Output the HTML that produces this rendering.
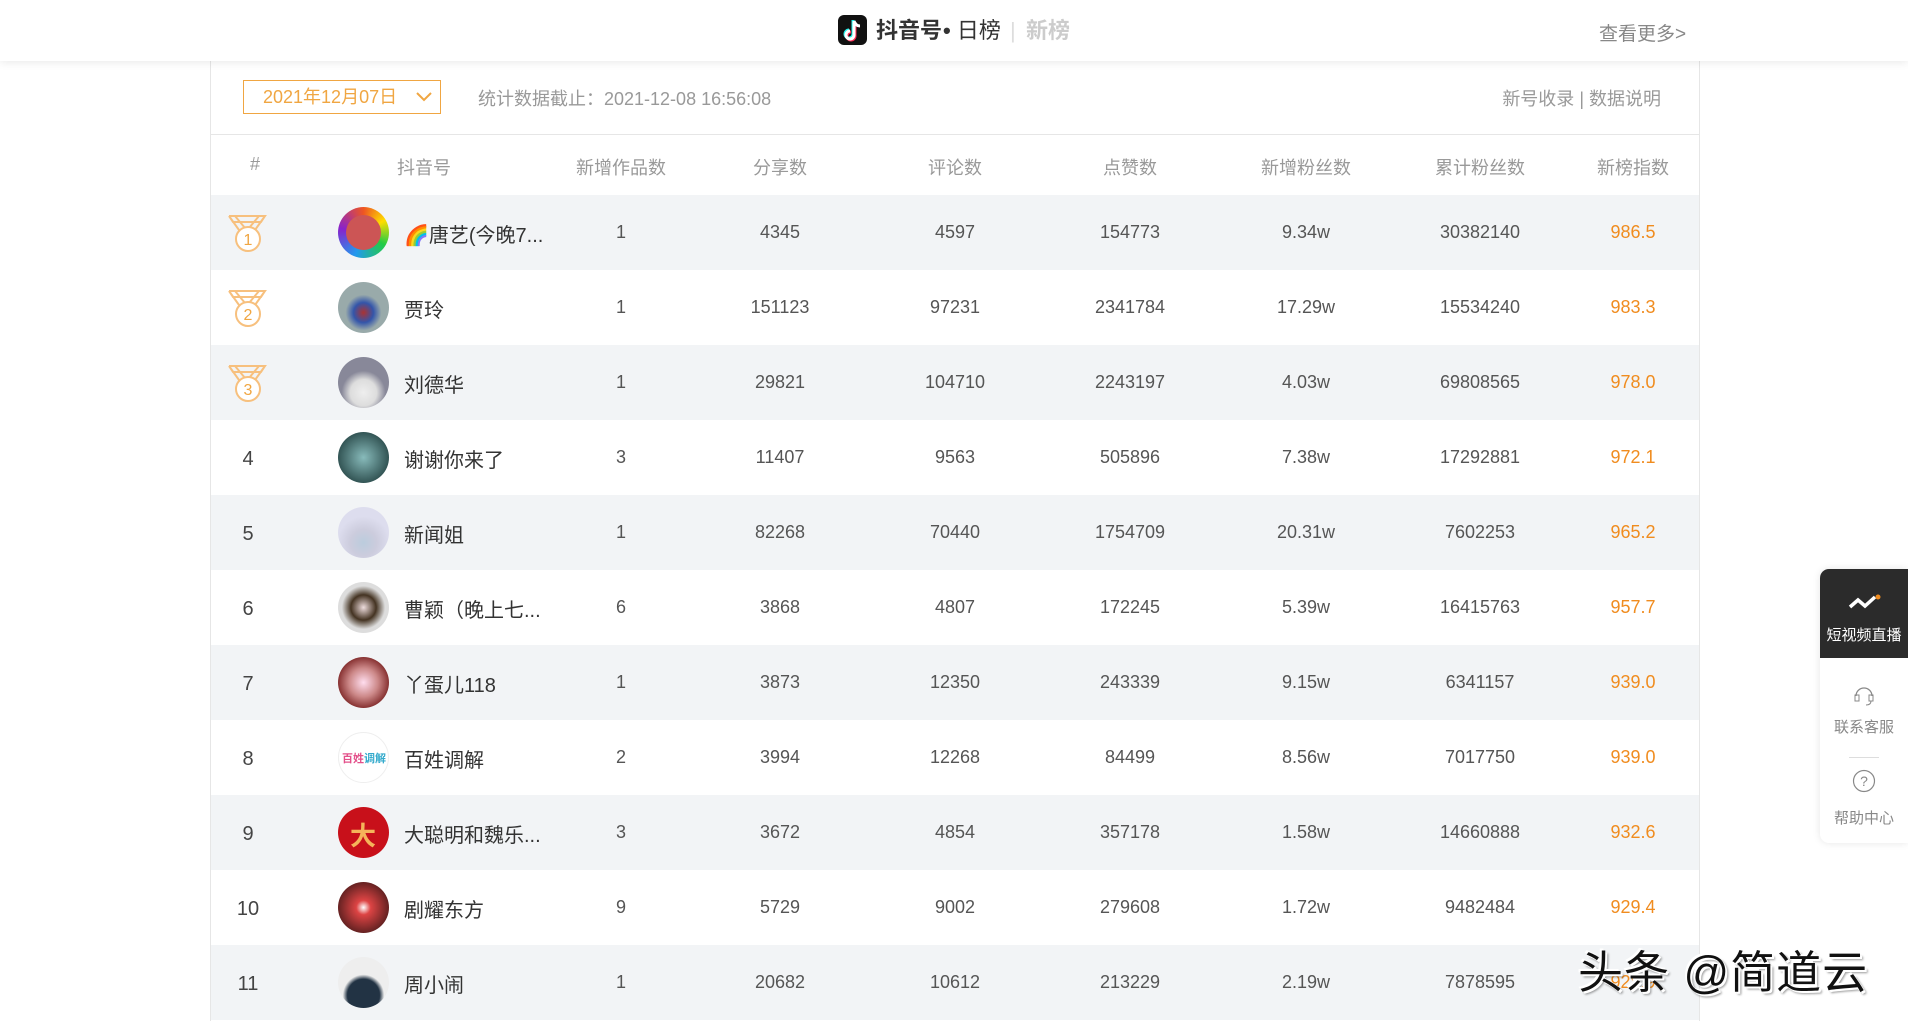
<!DOCTYPE html>
<html><head><meta charset="utf-8"><style>
*{margin:0;padding:0;box-sizing:border-box}
body{width:1908px;height:1016px;overflow:hidden;background:#fff;font-family:"Liberation Sans","Noto Sans CJK SC",sans-serif;position:relative;color:#333}
.hdr{position:absolute;left:0;top:0;width:1908px;height:61px;background:#fff;box-shadow:0 2px 8px rgba(0,0,0,.08);z-index:2}
.logo{position:absolute;left:838px;top:15px;width:29px;height:30px;background:#111;border-radius:6px}
.ht{position:absolute;top:17px;font-size:22px;line-height:28px}
.more{position:absolute;left:1599px;top:19px;font-size:19px;color:#888}
.box{position:absolute;left:210px;top:61px;width:1490px;height:960px;border-left:1px solid #e6e6e6;border-right:1px solid #e6e6e6}
.date{position:absolute;left:243px;top:80px;width:198px;height:34px;border:1px solid #f0a642;color:#f0a642;font-size:18px;line-height:32px;padding-left:19px}
.stat{position:absolute;left:478px;top:85px;font-size:18px;color:#999}
.rt{position:absolute;right:247px;top:85px;font-size:18px;color:#999}
.line{position:absolute;left:210px;top:134px;width:1490px;height:1px;background:#e6e6e6}
.th{position:absolute;top:154px;font-size:18px;color:#999;transform:translateX(-50%)}
.row{position:absolute;left:211px;width:1488px;height:75px}
.row.g{background:#f2f4f6}
.c{position:absolute;top:27px;font-size:18px;color:#555;transform:translateX(-50%);white-space:nowrap}
.o{color:#f08c1f}
.rk{position:absolute;left:37px;top:28px;font-size:20px;color:#444;transform:translateX(-50%)}
.av{position:absolute;left:127px;top:12px;width:51px;height:51px;border-radius:50%}
.nm{position:absolute;left:193px;top:24px;font-size:20px;color:#333;white-space:nowrap}
.side{position:absolute;left:1820px;top:569px;width:88px;height:274px;background:#fff;border-radius:9px 0 0 9px;box-shadow:0 0 8px rgba(0,0,0,.1);overflow:hidden}
.wm{position:absolute;left:1578px;top:936px;font-size:45px;color:#111;letter-spacing:1px;text-shadow:2px 2px 0 #fff,-2px -2px 0 #fff,3px 3px 2px rgba(0,0,0,.4)}
</style></head><body>
<div class="hdr">
<div class="logo"><svg width="29" height="30" viewBox="0 0 29 30"><path d="M16 6v14a4 4 0 1 1-4-4" stroke="#25f4ee" stroke-width="3" fill="none" transform="translate(-1,-1)"/><path d="M16 6v14a4 4 0 1 1-4-4" stroke="#fe2c55" stroke-width="3" fill="none" transform="translate(1,1)"/><path d="M16 6v14a4 4 0 1 1-4-4M16 6c1 3 3 5 6 5" stroke="#fff" stroke-width="3" fill="none"/></svg></div>
<div class="ht" style="left:876px;font-weight:bold">抖音号</div>
<div class="ht" style="left:943px"><b>•</b>&nbsp;日榜</div>
<div class="ht" style="left:1010px;color:#ddd">|</div>
<div class="ht" style="left:1026px;color:#ccc;font-weight:bold">新榜</div>
<div class="more">查看更多&gt;</div>
</div>
<div class="box"></div>
<div class="date">2021年12月07日<svg style="position:absolute;left:172px;top:11px" width="16" height="10"><path d="M1 1l7 7 7-7" stroke="#f0a642" stroke-width="2" fill="none"/></svg></div>
<div class="stat">统计数据截止：2021-12-08 16:56:08</div>
<div class="rt">新号收录 | 数据说明</div>
<div class="line"></div>
<div class="th" style="left:255px">#</div>
<div class="th" style="left:424px">抖音号</div>
<div class="th" style="left:621px">新增作品数</div>
<div class="th" style="left:780px">分享数</div>
<div class="th" style="left:955px">评论数</div>
<div class="th" style="left:1130px">点赞数</div>
<div class="th" style="left:1306px">新增粉丝数</div>
<div class="th" style="left:1480px">累计粉丝数</div>
<div class="th" style="left:1633px">新榜指数</div>

<div class="row g" style="top:195px"><svg style="position:absolute;left:14px;top:17px" width="46" height="42"><path d="M4 4h36l-10 14M4 4l10 14M10 4l10 12M34 4l-10 12M4 4l4 6h28l4-6" stroke="#f7c07e" stroke-width="2" fill="none"/><circle cx="23" cy="27" r="12" fill="#fff" stroke="#f7c07e" stroke-width="2"/><text x="23" y="33" font-size="16" fill="#f0a642" text-anchor="middle" font-family="Liberation Sans">1</text></svg><div class="av" style="background:conic-gradient(#e52 0,#fd0 60deg,#2c4 120deg,#29e 200deg,#82c 280deg,#e52)"><div style="position:absolute;left:8px;top:8px;width:35px;height:35px;border-radius:50%;background:#c55"></div></div><div class="nm">🌈唐艺(今晚7...</div><div class="c" style="left:410px">1</div><div class="c" style="left:569px">4345</div><div class="c" style="left:744px">4597</div><div class="c" style="left:919px">154773</div><div class="c" style="left:1095px">9.34w</div><div class="c" style="left:1269px">30382140</div><div class="c o" style="left:1422px">986.5</div></div>

<div class="row" style="top:270px"><svg style="position:absolute;left:14px;top:17px" width="46" height="42"><path d="M4 4h36l-10 14M4 4l10 14M10 4l10 12M34 4l-10 12M4 4l4 6h28l4-6" stroke="#f7c07e" stroke-width="2" fill="none"/><circle cx="23" cy="27" r="12" fill="#fff" stroke="#f7c07e" stroke-width="2"/><text x="23" y="33" font-size="16" fill="#f0a642" text-anchor="middle" font-family="Liberation Sans">2</text></svg><div class="av" style="background:radial-gradient(circle at 50% 60%,#a33 0,#35a 25%,#9aa 45%)"></div><div class="nm">贾玲</div><div class="c" style="left:410px">1</div><div class="c" style="left:569px">151123</div><div class="c" style="left:744px">97231</div><div class="c" style="left:919px">2341784</div><div class="c" style="left:1095px">17.29w</div><div class="c" style="left:1269px">15534240</div><div class="c o" style="left:1422px">983.3</div></div>

<div class="row g" style="top:345px"><svg style="position:absolute;left:14px;top:17px" width="46" height="42"><path d="M4 4h36l-10 14M4 4l10 14M10 4l10 12M34 4l-10 12M4 4l4 6h28l4-6" stroke="#f7c07e" stroke-width="2" fill="none"/><circle cx="23" cy="27" r="12" fill="#fff" stroke="#f7c07e" stroke-width="2"/><text x="23" y="33" font-size="16" fill="#f0a642" text-anchor="middle" font-family="Liberation Sans">3</text></svg><div class="av" style="background:radial-gradient(circle at 50% 70%,#eee 0,#ddd 30%,#889 50%)"></div><div class="nm">刘德华</div><div class="c" style="left:410px">1</div><div class="c" style="left:569px">29821</div><div class="c" style="left:744px">104710</div><div class="c" style="left:919px">2243197</div><div class="c" style="left:1095px">4.03w</div><div class="c" style="left:1269px">69808565</div><div class="c o" style="left:1422px">978.0</div></div>

<div class="row" style="top:420px"><div class="rk">4</div><div class="av" style="background:radial-gradient(circle,#8bb 0,#355 70%)"></div><div class="nm">谢谢你来了</div><div class="c" style="left:410px">3</div><div class="c" style="left:569px">11407</div><div class="c" style="left:744px">9563</div><div class="c" style="left:919px">505896</div><div class="c" style="left:1095px">7.38w</div><div class="c" style="left:1269px">17292881</div><div class="c o" style="left:1422px">972.1</div></div>

<div class="row g" style="top:495px"><div class="rk">5</div><div class="av" style="background:radial-gradient(circle at 50% 70%,#bcd 0,#ccd 30%,#dde 60%)"></div><div class="nm">新闻姐</div><div class="c" style="left:410px">1</div><div class="c" style="left:569px">82268</div><div class="c" style="left:744px">70440</div><div class="c" style="left:919px">1754709</div><div class="c" style="left:1095px">20.31w</div><div class="c" style="left:1269px">7602253</div><div class="c o" style="left:1422px">965.2</div></div>

<div class="row" style="top:570px"><div class="rk">6</div><div class="av" style="background:radial-gradient(circle at 50% 50%,#edd 0,#432 35%,#ddd 60%)"></div><div class="nm">曹颖（晚上七...</div><div class="c" style="left:410px">6</div><div class="c" style="left:569px">3868</div><div class="c" style="left:744px">4807</div><div class="c" style="left:919px">172245</div><div class="c" style="left:1095px">5.39w</div><div class="c" style="left:1269px">16415763</div><div class="c o" style="left:1422px">957.7</div></div>

<div class="row g" style="top:645px"><div class="rk">7</div><div class="av" style="background:radial-gradient(circle,#fde 0,#c88 40%,#833 70%)"></div><div class="nm">丫蛋儿118</div><div class="c" style="left:410px">1</div><div class="c" style="left:569px">3873</div><div class="c" style="left:744px">12350</div><div class="c" style="left:919px">243339</div><div class="c" style="left:1095px">9.15w</div><div class="c" style="left:1269px">6341157</div><div class="c o" style="left:1422px">939.0</div></div>

<div class="row" style="top:720px"><div class="rk">8</div><div class="av" style="background:#fff;border:1px solid #eee"><div style="position:absolute;left:3px;top:17px;font-size:11px;color:#e3508a;font-weight:bold;white-space:nowrap">百姓<span style="color:#3ac">调解</span></div></div><div class="nm">百姓调解</div><div class="c" style="left:410px">2</div><div class="c" style="left:569px">3994</div><div class="c" style="left:744px">12268</div><div class="c" style="left:919px">84499</div><div class="c" style="left:1095px">8.56w</div><div class="c" style="left:1269px">7017750</div><div class="c o" style="left:1422px">939.0</div></div>

<div class="row g" style="top:795px"><div class="rk">9</div><div class="av" style="background:#c8101a"><div style="position:absolute;left:12px;top:9px;font-size:26px;color:#f5b45a;font-weight:bold">大</div></div><div class="nm">大聪明和魏乐...</div><div class="c" style="left:410px">3</div><div class="c" style="left:569px">3672</div><div class="c" style="left:744px">4854</div><div class="c" style="left:919px">357178</div><div class="c" style="left:1095px">1.58w</div><div class="c" style="left:1269px">14660888</div><div class="c o" style="left:1422px">932.6</div></div>

<div class="row" style="top:870px"><div class="rk">10</div><div class="av" style="background:radial-gradient(circle,#fff 0,#d44 20%,#622 70%)"></div><div class="nm">剧耀东方</div><div class="c" style="left:410px">9</div><div class="c" style="left:569px">5729</div><div class="c" style="left:744px">9002</div><div class="c" style="left:919px">279608</div><div class="c" style="left:1095px">1.72w</div><div class="c" style="left:1269px">9482484</div><div class="c o" style="left:1422px">929.4</div></div>

<div class="row g" style="top:945px"><div class="rk">11</div><div class="av" style="background:radial-gradient(circle at 50% 75%,#234 0,#234 35%,#eee 45%)"></div><div class="nm">周小闹</div><div class="c" style="left:410px">1</div><div class="c" style="left:569px">20682</div><div class="c" style="left:744px">10612</div><div class="c" style="left:919px">213229</div><div class="c" style="left:1095px">2.19w</div><div class="c" style="left:1269px">7878595</div><div class="c o" style="left:1422px">928.9</div></div>

<div class="side">
<div style="height:89px;background:#2b2b2b;position:relative">
<svg style="position:absolute;left:28px;top:24px" width="34" height="20"><path d="M2 14l8-7 7 6 10-9" stroke="#fff" stroke-width="3.5" fill="none"/><circle cx="30" cy="4" r="2.5" fill="#f08c1f"/></svg>
<div style="position:absolute;left:0;width:88px;top:55px;text-align:center;color:#fff;font-size:15px">短视频直播</div></div>
<svg style="position:absolute;left:32px;top:113px" width="24" height="26"><path d="M4 14a8 8 0 0 1 16 0" stroke="#888" stroke-width="1.3" fill="none"/><rect x="3" y="13" width="4" height="6" stroke="#888" fill="none"/><rect x="17" y="13" width="4" height="6" stroke="#888" fill="none"/><path d="M19 19q0 4-5 4" stroke="#888" fill="none"/></svg>
<div style="position:absolute;left:0;width:88px;top:147px;text-align:center;color:#888;font-size:15px">联系客服</div>
<div style="position:absolute;left:29px;top:188px;width:30px;height:1px;background:#ddd"></div>
<svg style="position:absolute;left:32px;top:200px" width="24" height="24"><circle cx="12" cy="12" r="10.5" stroke="#888" stroke-width="1.2" fill="none"/><text x="12" y="17" font-size="14" fill="#888" text-anchor="middle" font-family="Liberation Sans">?</text></svg>
<div style="position:absolute;left:0;width:88px;top:238px;text-align:center;color:#888;font-size:15px">帮助中心</div>
</div>
<div class="wm">头条 @简道云</div>
</body></html>
